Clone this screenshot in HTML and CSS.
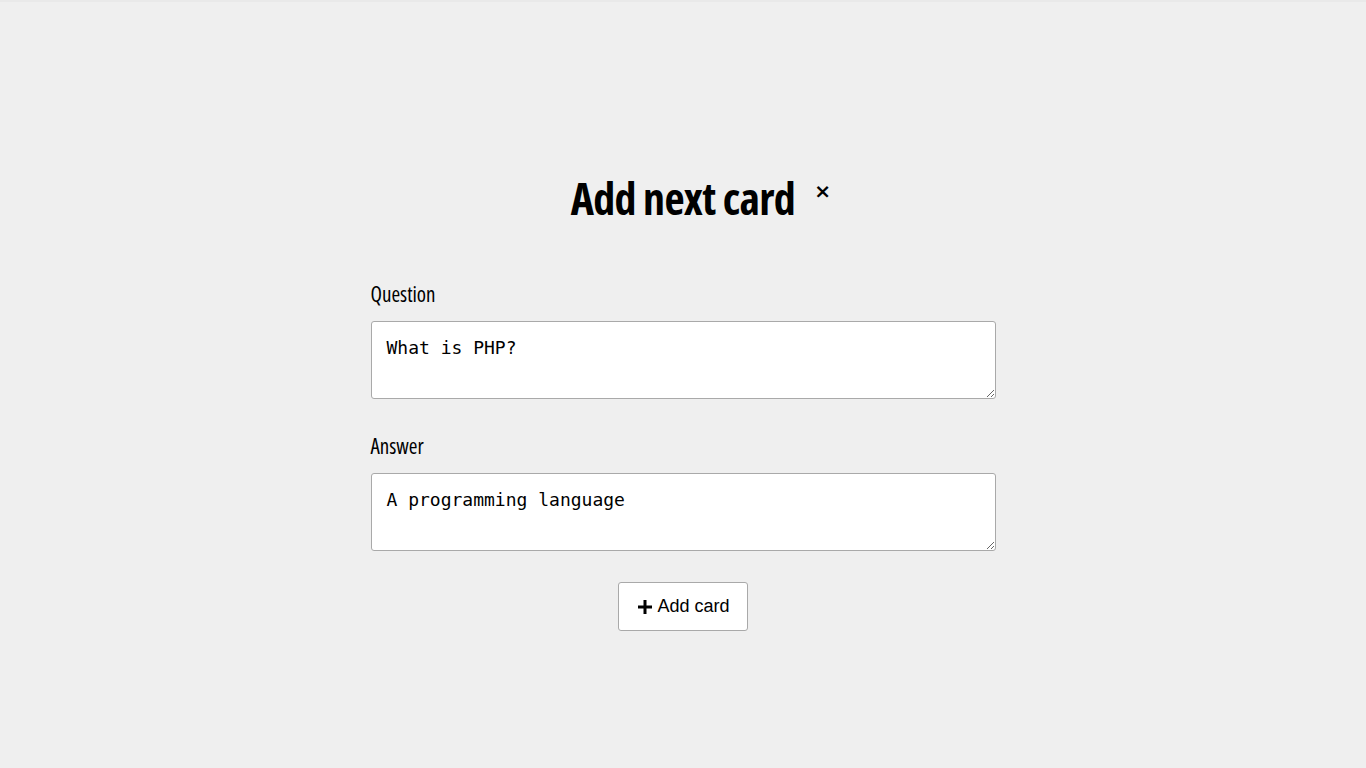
FILE: index.html
```html
<!DOCTYPE html>
<html>
<head>
<meta charset="utf-8">
<title>Add next card</title>
<link rel="stylesheet" href="styles.css">
</head>
<body>
<main class="page">
  <header class="title-row">
    <h1 class="title">Add next card</h1>
    <button class="close" type="button" aria-label="Close">&times;</button>
  </header>
  <form class="card-form">
    <label class="field">
      <span class="label">Question</span>
      <textarea class="input">What is PHP?</textarea>
    </label>
    <label class="field">
      <span class="label">Answer</span>
      <textarea class="input">A programming language</textarea>
    </label>
    <div class="actions">
      <button class="add-btn" type="button">
        <svg class="plus" viewBox="0 0 14 14" width="14" height="14" aria-hidden="true"><path d="M5.5 0h3v5.5H14v3H8.5V14h-3V8.5H0v-3h5.5z" fill="#000"/></svg>
        <span>Add card</span>
      </button>
    </div>
  </form>
</main>
</body>
</html>
```
FILE: styles.css
```css
html, body { margin: 0; padding: 0; }
body {
  background: #efefef;
  border-top: 2px solid #e9e9e9;
  min-height: 766px;
  font-family: "Open Sans", "DejaVu Sans", sans-serif;
  color: #000;
}
.page {
  display: flex;
  flex-direction: column;
  align-items: center;
  padding-top: 166px;
}
.title-row {
  position: relative;
  display: flex;
  justify-content: center;
}
.title {
  margin: 0;
  font-family: "Open Sans", sans-serif;
  font-stretch: condensed;
  font-weight: 700;
  font-size: 44px;
  letter-spacing: -0.7px;
  line-height: 60px;
}
.close {
  position: absolute;
  left: calc(100% + 19px);
  top: 13px;
  border: 0;
  background: none;
  padding: 0;
  font-family: "DejaVu Sans", sans-serif;
  font-weight: 700;
  font-size: 20px;
  line-height: 20px;
  color: #000;
  cursor: pointer;
}
.card-form {
  width: 625px;
  margin-top: 52px;
  display: flex;
  flex-direction: column;
}
.field {
  display: flex;
  flex-direction: column;
  margin-bottom: 33px;
}
.field:last-of-type { margin-bottom: 24px; }
.label {
  font-family: "Open Sans", sans-serif;
  font-stretch: condensed;
  font-size: 21px;
  line-height: 28px;
  margin-bottom: 13px;
}
.input {
  box-sizing: border-box;
  width: 625px;
  height: 78px;
  padding: 14px 15px;
  border: 1px solid #a9a9a9;
  border-radius: 3px;
  background: #fff;
  font-family: "DejaVu Sans Mono", monospace;
  font-size: 18px;
  line-height: 24px;
  color: #000;
  resize: vertical;
}
.actions {
  display: flex;
  justify-content: center;
  margin-top: 7px;
}
.add-btn {
  box-sizing: border-box;
  width: 130px;
  height: 49px;
  display: flex;
  align-items: center;
  justify-content: center;
  gap: 5px;
  background: #fff;
  border: 1px solid #a9a9a9;
  border-radius: 3px;
  font-family: "Liberation Sans", Arial, sans-serif;
  font-size: 18px;
  color: #000;
  cursor: pointer;
  padding: 0 0 0 2px;
}
.plus { display: block; }
```
